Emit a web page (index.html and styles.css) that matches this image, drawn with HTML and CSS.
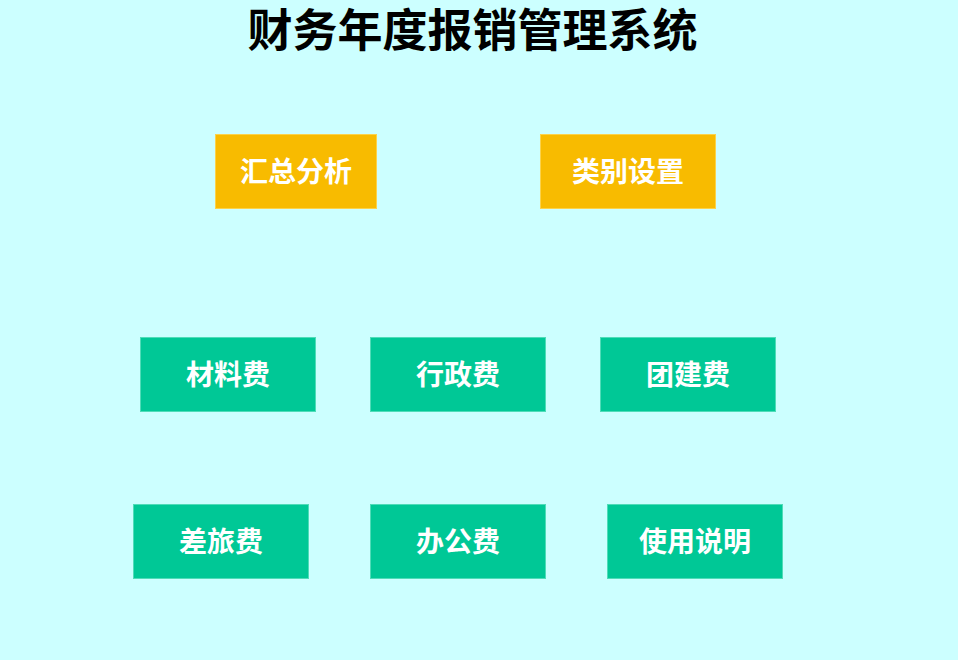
FILE: index.html
```html
<!DOCTYPE html>
<html lang="zh-CN">
<head>
    <meta charset="UTF-8">
    <title>财务年度报销管理系统</title>
    <link rel="stylesheet" href="styles.css">
</head>
<body>
    <h1 class="title">财务年度报销管理系统</h1>

    <!-- 顶部：汇总和设置 -->
    <div class="row row-top">
        <div class="btn btn-orange btn-narrow">汇总分析</div>
        <div class="btn btn-orange">类别设置</div>
    </div>

    <!-- 各类费用入口 -->
    <div class="row row-mid">
        <div class="btn btn-green">材料费</div>
        <div class="btn btn-green">行政费</div>
        <div class="btn btn-green">团建费</div>
    </div>
    <div class="row row-bottom">
        <div class="btn btn-green">差旅费</div>
        <div class="btn btn-green">办公费</div>
        <div class="btn btn-green">使用说明</div>
    </div>
</body>
</html>
```

FILE: styles.css
```css
html, body{
    margin: 0;
    padding: 0;
}
body{
    width: 958px;
    height: 660px;
    background: #ccffff;
    font-family: "Liberation Sans", "Noto Sans CJK SC", sans-serif;
    overflow: hidden;
}
.title{
    margin: 0;
    padding-right: 13px;
    font-size: 45px;
    line-height: 64px;
    font-weight: bold;
    text-align: center;
    color: #000;
}
.row{
    display: flex;
}
.row-top{
    margin-top: 70px;
    padding-left: 215px;
    gap: 163px;
}
.row-mid{
    margin-top: 128px;
    padding-left: 140px;
    gap: 54px;
}
.row-bottom{
    margin-top: 92px;
    padding-left: 133px;
    gap: 61px;
}
.btn{
    box-sizing: border-box;
    width: 176px;
    height: 75px;
    font-size: 28px;
    line-height: 75px;
    font-weight: bold;
    color: #fff;
    text-align: center;
    cursor: pointer;
}
.btn-narrow{
    width: 162px;
}
.btn-orange{
    background: #f8bb00;
    border: 1px solid #fcd24a;
}
.btn-green{
    background: #00c896;
    border: 1px solid #4fdcb8;
}
```
